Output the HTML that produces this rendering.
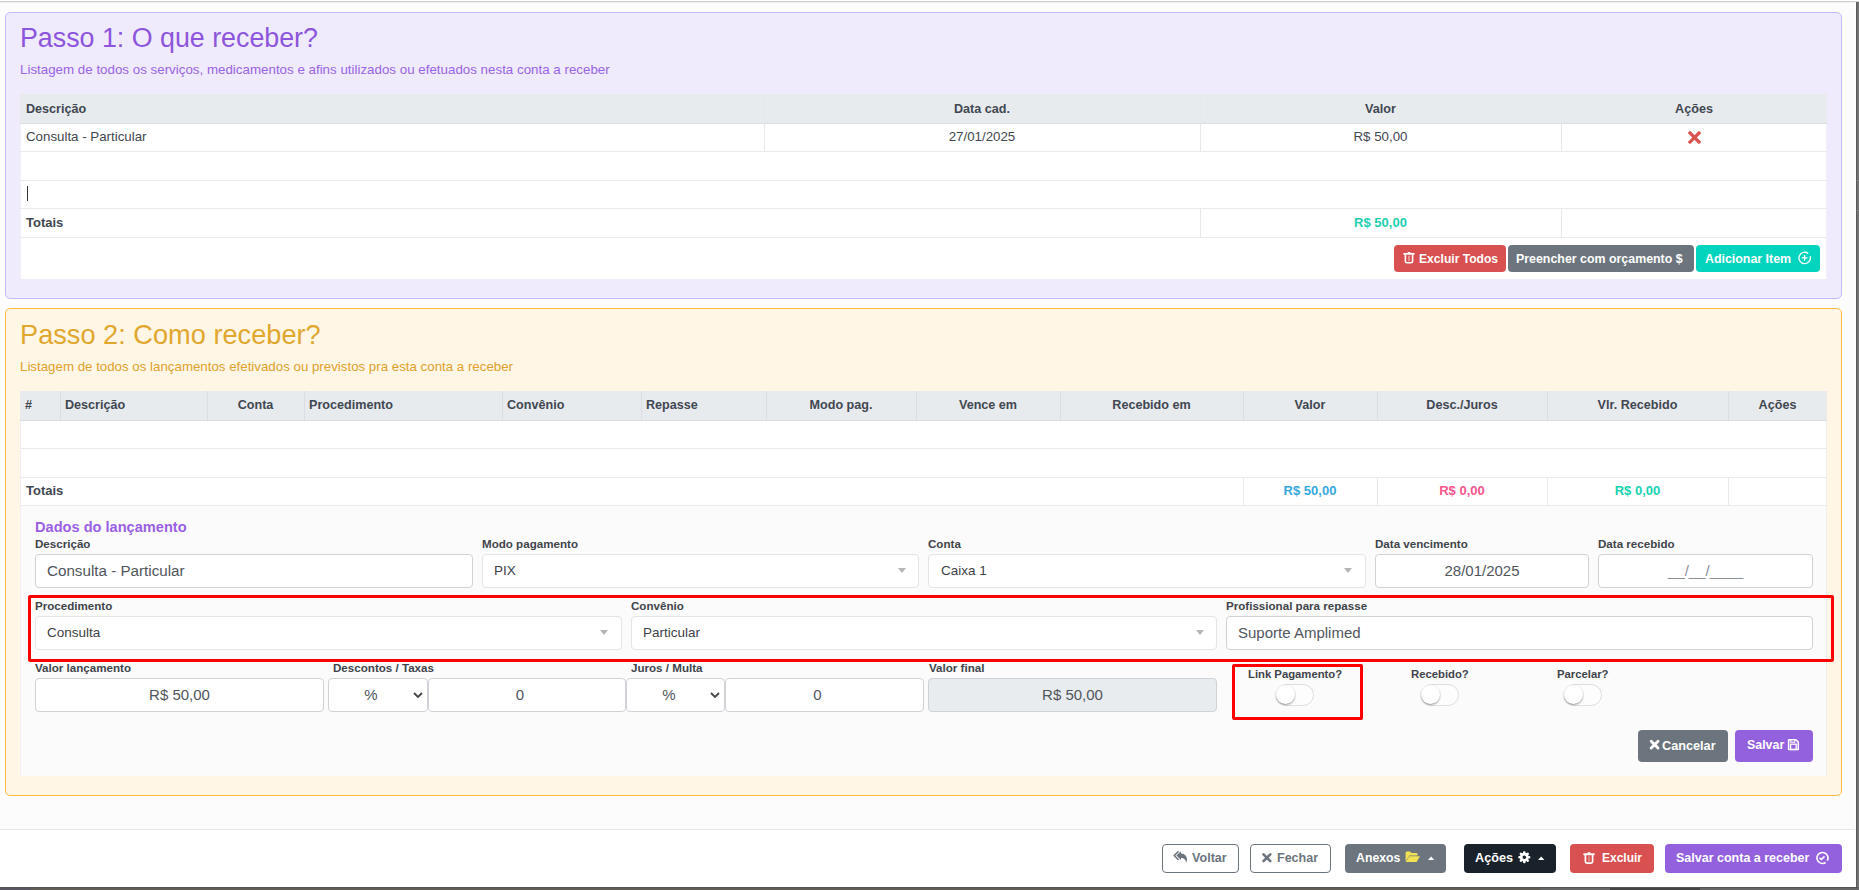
<!DOCTYPE html>
<html><head><meta charset="utf-8">
<style>
*{box-sizing:border-box;margin:0;padding:0}
html,body{width:1859px;height:890px;overflow:hidden}
body{position:relative;background:#727172;font-family:"Liberation Sans",sans-serif;color:#3d4148}
.a{position:absolute}
.modal{position:absolute;left:0;top:0;width:1856px;height:887px;background:#fcfcfc;overflow:hidden}
.t{position:absolute;white-space:nowrap;line-height:1}
.box1{position:absolute;left:5px;top:12px;width:1837px;height:287px;background:#efebfd;border:1px solid #c6b9fb;border-radius:5px}
.box2{position:absolute;left:5px;top:308px;width:1837px;height:488px;background:#fff6e6;border:1px solid #ffbc3f;border-radius:5px}
.hl{position:absolute;height:1px;background:#e9eaec}
.vl{position:absolute;width:1px;background:#e6e8ea}
.hdr{position:absolute;background:#e8ebee;border-bottom:1px solid #dadde1}
.th{font-weight:700;font-size:12.6px;color:#414751}
.td{font-size:13.3px;color:#424750}
.lbl{font-weight:700;font-size:11.6px;color:#40444a}
.inp{position:absolute;background:#fff;border:1px solid #cfd2d6;border-radius:4px;height:34px}
.sel2{position:absolute;background:#fff;border:1px solid #e4e5e7;border-radius:4px;height:34px}
.arr{position:absolute;width:0;height:0;border-left:4.5px solid transparent;border-right:4.5px solid transparent;border-top:5px solid #b5b5b5}
.btn{position:absolute;border-radius:4px;color:#fff;font-weight:700;font-size:12.5px}
.tog{position:absolute;width:38px;height:22px;border-radius:11px;border:1px solid #dedede;background:#fdfdfd}
.tog:after{content:"";position:absolute;left:-1px;top:0px;width:19px;height:19px;border-radius:50%;background:#fff;box-shadow:0 1px 2px rgba(0,0,0,.4)}
.red{position:absolute;border:3px solid #ff0000;border-radius:2px}
</style></head><body>
<div class="modal">
  <div class="a" style="left:0;top:1px;width:1856px;height:1px;background:#cfd0d0"></div>
  <div class="a" style="left:0;top:2px;width:1856px;height:1px;background:#eff0f2"></div>

  <!-- PASSO 1 -->
  <div class="box1"></div>
  <div class="t" style="left:20px;top:25px;font-size:26.8px;color:#8d55dc">Passo 1: O que receber?</div>
  <div class="t" style="left:20px;top:63px;font-size:13.35px;color:#9a63e4">Listagem de todos os serviços, medicamentos e afins utilizados ou efetuados nesta conta a receber</div>

  <div class="a" style="left:20px;top:94px;width:1807px;height:185px;background:#fff"></div>
  <div class="hdr" style="left:20px;top:94px;width:1807px;height:30px"></div>
  <div class="vl" style="left:20px;top:124px;height:155px;background:#f0f0f2"></div>
  <div class="vl" style="left:1826px;top:124px;height:155px;background:#f0f0f2"></div>
  <div class="vl" style="left:764px;top:94px;height:57px"></div>
  <div class="vl" style="left:1200px;top:94px;height:57px"></div>
  <div class="vl" style="left:1561px;top:94px;height:57px"></div>
  <div class="vl" style="left:1200px;top:209px;height:28px"></div>
  <div class="vl" style="left:1561px;top:209px;height:28px"></div>
  <div class="hl" style="left:20px;top:151px;width:1807px"></div>
  <div class="hl" style="left:20px;top:180px;width:1807px"></div>
  <div class="hl" style="left:20px;top:208px;width:1807px"></div>
  <div class="hl" style="left:20px;top:237px;width:1807px"></div>

  <div class="t th" style="left:26px;top:103px">Descrição</div>
  <div class="t th" style="left:764px;width:436px;text-align:center;top:103px">Data cad.</div>
  <div class="t th" style="left:1200px;width:361px;text-align:center;top:103px">Valor</div>
  <div class="t th" style="left:1561px;width:266px;text-align:center;top:103px">Ações</div>

  <div class="t td" style="left:26px;top:130px">Consulta - Particular</div>
  <div class="t td" style="left:764px;width:436px;text-align:center;top:130px">27/01/2025</div>
  <div class="t td" style="left:1200px;width:361px;text-align:center;top:130px">R$ 50,00</div>
  <svg class="a" style="left:1688px;top:131px" width="13" height="13" viewBox="0 0 13 13"><path d="M2 2L11 11M11 2L2 11" stroke="#d9534f" stroke-width="3.2" stroke-linecap="square"/></svg>
  <div class="a" style="left:27px;top:186px;width:1px;height:15px;background:#333"></div>

  <div class="t th" style="left:26px;top:216px;font-size:13px">Totais</div>
  <div class="t" style="left:1200px;width:361px;text-align:center;top:216px;font-weight:700;font-size:13px;color:#1ccfb1">R$ 50,00</div>

  <div class="btn" style="left:1394px;top:245px;width:112px;height:27px;background:#d85050"></div>
  <svg class="a" style="left:1403px;top:252px" width="12" height="12" viewBox="0 0 12 12"><rect x="0.2" y="0.9" width="11.6" height="1.8" rx="0.9" fill="#fff"/><rect x="4.6" y="0" width="2.8" height="1.4" fill="#fff"/><path d="M2.4 2.5V9.3Q2.4 10.8 3.9 10.8H8.1Q9.6 10.8 9.6 9.3V2.5" fill="none" stroke="#fff" stroke-width="1.6"/><path d="M6 3.8V9.3" stroke="#fff" stroke-opacity=".7" stroke-width="1.1"/></svg>
  <div class="t btn" style="left:1419px;top:253px;font-size:12.1px">Excluir Todos</div>
  <div class="btn" style="left:1508px;top:245px;width:186px;height:27px;background:#6c757d"></div>
  <div class="t btn" style="left:1516px;top:253px;font-size:12.4px">Preencher com orçamento $</div>
  <div class="btn" style="left:1696px;top:245px;width:124px;height:27px;background:#02d4bd"></div>
  <div class="t btn" style="left:1705px;top:253px;font-size:12.4px">Adicionar Item</div>
  <svg class="a" style="left:1798px;top:251px" width="14" height="14" viewBox="0 0 14 14"><path d="M10.3 2.6A5.7 5.7 0 1 0 12.1 5.3" fill="none" stroke="#fff" stroke-width="1.3"/><path d="M6.6 4V9.8M3.7 6.9H9.5" stroke="#fff" stroke-width="1.3"/></svg>

  <!-- PASSO 2 -->
  <div class="box2"></div>
  <div class="t" style="left:20px;top:321px;font-size:27.2px;color:#e2a72e">Passo 2: Como receber?</div>
  <div class="t" style="left:20px;top:360px;font-size:13.3px;color:#e0a12c">Listagem de todos os lançamentos efetivados ou previstos pra esta conta a receber</div>

  <div class="a" style="left:20px;top:391px;width:1807px;height:115px;background:#fff"></div>
  <div class="hdr" style="left:20px;top:391px;width:1807px;height:30px"></div>
  <div class="vl" style="left:60px;top:391px;height:29px;background:#dadde1"></div>
  <div class="vl" style="left:207px;top:391px;height:29px;background:#dadde1"></div>
  <div class="vl" style="left:304px;top:391px;height:29px;background:#dadde1"></div>
  <div class="vl" style="left:502px;top:391px;height:29px;background:#dadde1"></div>
  <div class="vl" style="left:641px;top:391px;height:29px;background:#dadde1"></div>
  <div class="vl" style="left:766px;top:391px;height:29px;background:#dadde1"></div>
  <div class="vl" style="left:916px;top:391px;height:29px;background:#dadde1"></div>
  <div class="vl" style="left:1060px;top:391px;height:29px;background:#dadde1"></div>
  <div class="vl" style="left:1243px;top:391px;height:29px;background:#dadde1"></div>
  <div class="vl" style="left:1377px;top:391px;height:29px;background:#dadde1"></div>
  <div class="vl" style="left:1547px;top:391px;height:29px;background:#dadde1"></div>
  <div class="vl" style="left:1728px;top:391px;height:29px;background:#dadde1"></div>
  <div class="vl" style="left:1243px;top:478px;height:27px"></div>
  <div class="vl" style="left:1377px;top:478px;height:27px"></div>
  <div class="vl" style="left:1547px;top:478px;height:27px"></div>
  <div class="vl" style="left:1728px;top:478px;height:27px"></div>
  <div class="hl" style="left:20px;top:448px;width:1807px"></div>
  <div class="hl" style="left:20px;top:477px;width:1807px"></div>
  <div class="hl" style="left:20px;top:505px;width:1807px"></div>

  <div class="t th" style="left:25px;top:399px">#</div>
  <div class="t th" style="left:65px;top:399px">Descrição</div>
  <div class="t th" style="left:207px;width:97px;text-align:center;top:399px">Conta</div>
  <div class="t th" style="left:309px;top:399px">Procedimento</div>
  <div class="t th" style="left:507px;top:399px">Convênio</div>
  <div class="t th" style="left:646px;top:399px">Repasse</div>
  <div class="t th" style="left:766px;width:150px;text-align:center;top:399px">Modo pag.</div>
  <div class="t th" style="left:916px;width:144px;text-align:center;top:399px">Vence em</div>
  <div class="t th" style="left:1060px;width:183px;text-align:center;top:399px">Recebido em</div>
  <div class="t th" style="left:1243px;width:134px;text-align:center;top:399px">Valor</div>
  <div class="t th" style="left:1377px;width:170px;text-align:center;top:399px">Desc./Juros</div>
  <div class="t th" style="left:1547px;width:181px;text-align:center;top:399px">Vlr. Recebido</div>
  <div class="t th" style="left:1728px;width:99px;text-align:center;top:399px">Ações</div>

  <div class="t th" style="left:26px;top:484px;font-size:13px">Totais</div>
  <div class="t" style="left:1243px;width:134px;text-align:center;top:484px;font-weight:700;font-size:13px;color:#36a8df">R$ 50,00</div>
  <div class="t" style="left:1377px;width:170px;text-align:center;top:484px;font-weight:700;font-size:13px;color:#f5558c">R$ 0,00</div>
  <div class="t" style="left:1547px;width:181px;text-align:center;top:484px;font-weight:700;font-size:13px;color:#16d2b3">R$ 0,00</div>

  <!-- form area -->
  <div class="a" style="left:20px;top:506px;width:1807px;height:270px;background:#fbfbfb"></div>
  <div class="vl" style="left:20px;top:421px;height:355px;background:#efeff0"></div>
  <div class="vl" style="left:1826px;top:421px;height:355px;background:#efeff0"></div>
  <div class="t" style="left:35px;top:520px;font-weight:700;font-size:14.6px;color:#9a5fe3">Dados do lançamento</div>

  <div class="t lbl" style="left:35px;top:538px">Descrição</div>
  <div class="t lbl" style="left:482px;top:538px">Modo pagamento</div>
  <div class="t lbl" style="left:928px;top:538px">Conta</div>
  <div class="t lbl" style="left:1375px;top:538px">Data vencimento</div>
  <div class="t lbl" style="left:1598px;top:538px">Data recebido</div>

  <div class="inp" style="left:35px;top:554px;width:438px"></div>
  <div class="t" style="left:47px;top:563px;font-size:15.2px;color:#50555c">Consulta - Particular</div>
  <div class="sel2" style="left:482px;top:554px;width:437px"></div>
  <div class="t" style="left:494px;top:564px;font-size:13.5px;color:#3d4148">PIX</div>
  <div class="arr" style="left:898px;top:568px"></div>
  <div class="sel2" style="left:928px;top:554px;width:438px"></div>
  <div class="t" style="left:941px;top:564px;font-size:13.5px;color:#3d4148">Caixa 1</div>
  <div class="arr" style="left:1344px;top:568px"></div>
  <div class="inp" style="left:1375px;top:554px;width:214px"></div>
  <div class="t" style="left:1375px;width:214px;text-align:center;top:563px;font-size:15px;color:#50555c">28/01/2025</div>
  <div class="inp" style="left:1598px;top:554px;width:215px"></div>
  <div class="t" style="left:1598px;width:215px;text-align:center;top:563px;font-size:15px;color:#8a9099">__/__/____</div>

  <div class="red" style="left:28px;top:595px;width:1806px;height:67px"></div>
  <div class="t lbl" style="left:35px;top:600px">Procedimento</div>
  <div class="t lbl" style="left:631px;top:600px">Convênio</div>
  <div class="t lbl" style="left:1226px;top:600px">Profissional para repasse</div>
  <div class="sel2" style="left:35px;top:616px;width:587px"></div>
  <div class="t" style="left:47px;top:626px;font-size:13.5px;color:#3d4148">Consulta</div>
  <div class="arr" style="left:600px;top:630px"></div>
  <div class="sel2" style="left:631px;top:616px;width:586px"></div>
  <div class="t" style="left:643px;top:626px;font-size:13.5px;color:#3d4148">Particular</div>
  <div class="arr" style="left:1196px;top:630px"></div>
  <div class="inp" style="left:1226px;top:616px;width:587px"></div>
  <div class="t" style="left:1238px;top:625px;font-size:15px;color:#50555c">Suporte Amplimed</div>

  <div class="t lbl" style="left:35px;top:662px">Valor lançamento</div>
  <div class="t lbl" style="left:333px;top:662px">Descontos / Taxas</div>
  <div class="t lbl" style="left:631px;top:662px">Juros / Multa</div>
  <div class="t lbl" style="left:929px;top:662px">Valor final</div>

  <div class="inp" style="left:35px;top:678px;width:289px"></div>
  <div class="t" style="left:35px;width:289px;text-align:center;top:687px;font-size:15px;color:#50555c">R$ 50,00</div>
  <div class="inp" style="left:328px;top:678px;width:100px"></div>
  <div class="t" style="left:328px;width:86px;text-align:center;top:687px;font-size:15px;color:#50555c">%</div>
  <svg class="a" style="left:413px;top:691px" width="10" height="8" viewBox="0 0 10 8"><path d="M1 2L5 6L9 2" fill="none" stroke="#444" stroke-width="1.8"/></svg>
  <div class="inp" style="left:428px;top:678px;width:198px"></div>
  <div class="t" style="left:421px;width:198px;text-align:center;top:687px;font-size:15px;color:#50555c">0</div>
  <div class="inp" style="left:626px;top:678px;width:99px"></div>
  <div class="t" style="left:626px;width:86px;text-align:center;top:687px;font-size:15px;color:#50555c">%</div>
  <svg class="a" style="left:710px;top:691px" width="10" height="8" viewBox="0 0 10 8"><path d="M1 2L5 6L9 2" fill="none" stroke="#444" stroke-width="1.8"/></svg>
  <div class="inp" style="left:725px;top:678px;width:199px"></div>
  <div class="t" style="left:718px;width:199px;text-align:center;top:687px;font-size:15px;color:#50555c">0</div>
  <div class="inp" style="left:928px;top:678px;width:289px;background:#e9ecef"></div>
  <div class="t" style="left:928px;width:289px;text-align:center;top:687px;font-size:15px;color:#50555c">R$ 50,00</div>

  <div class="red" style="left:1232px;top:664px;width:131px;height:56px"></div>
  <div class="t lbl" style="left:1248px;top:669px;font-size:11.3px">Link Pagamento?</div>
  <div class="tog" style="left:1276px;top:684px"></div>
  <div class="t lbl" style="left:1411px;top:669px;font-size:11.3px">Recebido?</div>
  <div class="tog" style="left:1421px;top:684px"></div>
  <div class="t lbl" style="left:1557px;top:669px;font-size:11.3px">Parcelar?</div>
  <div class="tog" style="left:1564px;top:684px"></div>

  <div class="btn" style="left:1638px;top:730px;width:90px;height:32px;background:#6c757d"></div>
  <svg class="a" style="left:1649px;top:739px" width="12" height="12" viewBox="0 0 12 12"><path d="M2.2 2.2L9 9M9 2.2L2.2 9" stroke="#fff" stroke-width="2.9" stroke-linecap="round"/></svg>
  <div class="t btn" style="left:1662px;top:740px;font-size:12.7px">Cancelar</div>
  <div class="btn" style="left:1735px;top:730px;width:78px;height:32px;background:#9360de"></div>
  <div class="t btn" style="left:1747px;top:739px;font-size:12.4px">Salvar</div>

  <!-- footer -->
  <div class="a" style="left:0;top:829px;width:1856px;height:58px;background:#fff;border-top:1px solid #e4e7eb"></div>
  <div class="btn" style="left:1162px;top:844px;width:77px;height:29px;border:1px solid #6c757d;background:#fff"></div>
  <div class="t btn" style="left:1192px;top:852px;color:#6c757d;font-size:12.6px">Voltar</div>
  <div class="btn" style="left:1250px;top:844px;width:81px;height:29px;border:1px solid #6c757d;background:#fff"></div>
  <svg class="a" style="left:1261px;top:852px" width="12" height="12" viewBox="0 0 12 12"><path d="M2.5 2.3L9.3 9.1M9.3 2.3L2.5 9.1" stroke="#6c757d" stroke-width="2.6" stroke-linecap="round"/></svg>
  <div class="t btn" style="left:1277px;top:852px;color:#6c757d;font-size:12.5px">Fechar</div>
  <div class="btn" style="left:1345px;top:844px;width:101px;height:29px;background:#6c757d"></div>
  <div class="t btn" style="left:1356px;top:852px;font-size:12.3px">Anexos</div>
  <div class="btn" style="left:1464px;top:844px;width:92px;height:29px;background:#19212b"></div>
  <div class="t btn" style="left:1475px;top:852px;font-size:12.7px">Ações</div>
  <div class="btn" style="left:1570px;top:844px;width:84px;height:29px;background:#d85050"></div>
  <div class="t btn" style="left:1602px;top:852px;font-size:12px">Excluir</div>
  <div class="btn" style="left:1665px;top:844px;width:177px;height:29px;background:#9360de"></div>
  <div class="t btn" style="left:1676px;top:852px;font-size:12.5px">Salvar conta a receber</div>

  <svg class="a" style="left:1173px;top:850px" width="16" height="14" viewBox="0 0 16 14"><path d="M5.6 1.2L1.2 5.6L5.6 10" fill="none" stroke="#6c757d" stroke-width="1.5"/><path d="M3.4 5.6L8 1.2V3.6C12 3.8 14.2 6.6 14 10.2C13.9 11.4 13.6 12.2 13.3 12.8C12.9 9.6 11.2 7.8 8 7.7V10Z" fill="#6c757d"/></svg>
  <svg class="a" style="left:1405px;top:851px" width="16" height="12" viewBox="0 0 16 12"><path d="M0.6 10.5V1.8Q0.6 0.6 1.8 0.6H5L6.6 2.1H11.2Q12.5 2.1 12.5 3.3V4.6H4.4Z" fill="#f0e052"/><path d="M4.3 5.2H15L11.6 11H0.8Z" fill="#f0e052"/></svg>
  <svg class="a" style="left:1428px;top:856px" width="7" height="5" viewBox="0 0 7 5"><path d="M0 4L3.1 0.6L6.2 4Z" fill="#fff"/></svg>
  <svg class="a" style="left:1518px;top:851px" width="13" height="13" viewBox="0 0 13 13"><rect x="5.05" y="0.2" width="2.5" height="3" rx="0.9" fill="#fff" transform="rotate(0 6.3 6.2)"/><rect x="5.05" y="0.2" width="2.5" height="3" rx="0.9" fill="#fff" transform="rotate(45 6.3 6.2)"/><rect x="5.05" y="0.2" width="2.5" height="3" rx="0.9" fill="#fff" transform="rotate(90 6.3 6.2)"/><rect x="5.05" y="0.2" width="2.5" height="3" rx="0.9" fill="#fff" transform="rotate(135 6.3 6.2)"/><rect x="5.05" y="0.2" width="2.5" height="3" rx="0.9" fill="#fff" transform="rotate(180 6.3 6.2)"/><rect x="5.05" y="0.2" width="2.5" height="3" rx="0.9" fill="#fff" transform="rotate(225 6.3 6.2)"/><rect x="5.05" y="0.2" width="2.5" height="3" rx="0.9" fill="#fff" transform="rotate(270 6.3 6.2)"/><rect x="5.05" y="0.2" width="2.5" height="3" rx="0.9" fill="#fff" transform="rotate(315 6.3 6.2)"/><circle cx="6.3" cy="6.2" r="4.4" fill="#fff"/><circle cx="6.3" cy="6.2" r="1.8" fill="#19212b"/></svg>
  <svg class="a" style="left:1538px;top:856px" width="7" height="5" viewBox="0 0 7 5"><path d="M0 4L3.2 0.4L6.4 4Z" fill="#fff"/></svg>
  <svg class="a" style="left:1583px;top:852px" width="12" height="12" viewBox="0 0 12 12"><rect x="0.2" y="1.3" width="11.6" height="1.9" rx="0.9" fill="#fff"/><rect x="4.6" y="0.2" width="2.8" height="1.6" fill="#fff"/><path d="M2.4 3V9.6Q2.4 11.1 3.9 11.1H8.1Q9.6 11.1 9.6 9.6V3" fill="none" stroke="#fff" stroke-width="1.7"/><path d="M6 4.2V9.6" stroke="#fff" stroke-opacity=".6" stroke-width="1"/></svg>
  <svg class="a" style="left:1815px;top:851px" width="15" height="14" viewBox="0 0 15 14"><path d="M12.3 9.6A5.5 5.5 0 1 0 10.6 11.5" fill="none" stroke="#fff" stroke-width="1.6"/><path d="M4.6 6.9L6.4 8.5L9.5 5.4" fill="none" stroke="#fff" stroke-width="1.6"/></svg>
  <svg class="a" style="left:1787px;top:738px" width="13" height="13" viewBox="0 0 13 13"><path d="M1.6 1.7H8.9L11.3 4.1V11.6H1.6Z" fill="none" stroke="#fff" stroke-width="1.5" stroke-linejoin="round"/><path d="M3.8 1.8V4.2H7.8V1.8" fill="none" stroke="#fff" stroke-width="1.1"/><rect x="3.6" y="6.2" width="5.6" height="5.3" fill="none" stroke="#fff" stroke-width="1.3"/></svg>
</div>
<div class="a" style="left:1856px;top:2px;width:1px;height:886px;background:#5b5a5d"></div>
<div class="a" style="left:0;top:887px;width:1859px;height:3px;background:#5f5d56"></div>
<div class="a" style="left:0;top:887px;width:1859px;height:1px;background:#555350"></div>
<div class="a" style="left:0;top:888px;width:31px;height:2px;background:#5a5660"></div>
<div class="a" style="left:1540px;top:888px;width:319px;height:2px;background:#666"></div>
<div class="a" style="left:1610px;top:888px;width:90px;height:2px;background:#444"></div>
<div class="a" style="left:1855px;top:2px;width:1px;height:885px;background:#fff"></div>
<div class="a" style="left:1857px;top:180px;width:2px;height:1px;background:#8a8a8a"></div>
<div class="a" style="left:1857px;top:210px;width:2px;height:1px;background:#8a8a8a"></div>
<div class="a" style="left:0;top:0;width:1859px;height:1px;background:#fff"></div>
<div class="a" style="left:0;top:1px;width:1859px;height:1px;background:#cdcfcf"></div>
</body></html>
